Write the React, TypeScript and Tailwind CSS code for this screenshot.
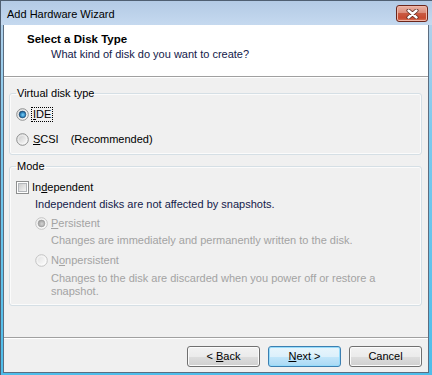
import { useId } from "react";
import type { ReactNode } from "react";

const font = "font-['Segoe_UI','Liberation_Sans',Arial,sans-serif]";

function Radio({ checked, disabled }: { checked?: boolean; disabled?: boolean }) {
  const id = useId().replace(/:/g, "");
  const ring = disabled ? "#c4c4c4" : "#8e8f8f";
  return (
    <svg width="13" height="13" viewBox="0 0 13 13" className="shrink-0">
      <defs>
        <linearGradient id={`o${id}`} x1="0" y1="0" x2="1" y2="1">
          <stop offset="0" stopColor={disabled ? "#ececec" : "#dcdcdc"} />
          <stop offset="1" stopColor="#ffffff" />
        </linearGradient>
        <linearGradient id={`i${id}`} x1="0" y1="0" x2="1" y2="1">
          <stop offset="0" stopColor={disabled ? "#e4e4e4" : "#cfcfcf"} />
          <stop offset="1" stopColor={disabled ? "#fafafa" : "#f7f7f7"} />
        </linearGradient>
        <radialGradient id={`d${id}`} cx="0.55" cy="0.55" r="0.6">
          <stop offset="0" stopColor={disabled ? "#d4d4d4" : "#7fd4fa"} />
          <stop offset="0.55" stopColor={disabled ? "#b4b4b4" : "#2f86c0"} />
          <stop offset="1" stopColor={disabled ? "#8e8e8e" : "#163f66"} />
        </radialGradient>
      </defs>
      <circle cx="6.5" cy="6.5" r="5.8" fill={`url(#o${id})`} stroke={ring} strokeWidth="1" />
      {checked ? (
        <circle cx="6.5" cy="6.5" r="3.4" fill={`url(#d${id})`} stroke={disabled ? "#9a9a9a" : "#1c4a70"} strokeWidth="0.6" />
      ) : (
        <circle cx="6.5" cy="6.5" r="3.6" fill={`url(#i${id})`} />
      )}
    </svg>
  );
}

function Checkbox() {
  const id = useId().replace(/:/g, "");
  return (
    <svg width="13" height="13" viewBox="0 0 13 13" className="shrink-0">
      <defs>
        <linearGradient id={`c${id}`} x1="0" y1="0" x2="1" y2="1">
          <stop offset="0" stopColor="#cbcbcb" />
          <stop offset="1" stopColor="#f6f6f6" />
        </linearGradient>
      </defs>
      <rect x="0.5" y="0.5" width="12" height="12" fill="#ffffff" stroke="#8e8f8f" />
      <rect x="2.5" y="2.5" width="8" height="8" fill={`url(#c${id})`} stroke="#b3b6ba" />
    </svg>
  );
}

function WinButton({ children, primary }: { children: ReactNode; primary?: boolean }) {
  return (
    <button
      className={
        primary
          ? "h-[21px] w-[73px] rounded-[3px] border border-[#3c7fb1] bg-[linear-gradient(to_bottom,#e8f5fc_0%,#dcf0fb_50%,#c2e6fa_51%,#aad9f4_100%)] text-[11px] leading-[15px] text-black shadow-[inset_0_0_0_1px_#97dcfb]"
          : "h-[21px] w-[73px] rounded-[3px] border border-[#707070] bg-[linear-gradient(to_bottom,#f2f2f2_0%,#ebebeb_50%,#dddddd_51%,#cfcfcf_100%)] text-[11px] leading-[15px] text-black shadow-[inset_0_0_0_1px_#fbfbfb]"
      }
    >
      {children}
    </button>
  );
}

export default function App() {
  return (
    <div
      className={`${font} flex h-[375px] w-[432px] flex-col overflow-hidden border-l border-t border-[#4f5f72] bg-[linear-gradient(to_bottom,#bcd2ea_0%,#7cc9ee_35%,#4dbdea_100%)] text-[11px] text-black`}
    >
      <div className="flex h-[24px] shrink-0 items-start justify-between bg-[linear-gradient(to_bottom,#b3cae5,#c5d9ef)] pl-[6px] pr-[4px]">
        <span className="mt-[6px] leading-[15px] text-black">Add Hardware Wizard</span>
        <div className="mt-[4px] flex h-[17px] w-[32px] items-center justify-center rounded-[3px] border border-[#6c261b] bg-[linear-gradient(to_bottom,#eab2a4_0%,#dc8d7b_45%,#c95a42_50%,#c84a30_80%,#d7775c_100%)] shadow-[inset_0_0_0_1px_#f0b7a8]">
          <svg width="13" height="10" viewBox="0 0 13 10">
            <path d="M2.5 1.5 L10.5 8.5 M10.5 1.5 L2.5 8.5" stroke="#5b2a22" strokeWidth="4" strokeLinecap="round" />
            <path d="M2.5 1.5 L10.5 8.5 M10.5 1.5 L2.5 8.5" stroke="#ffffff" strokeWidth="2.4" strokeLinecap="round" />
          </svg>
        </div>
      </div>

      <div className="flex min-h-0 flex-1 flex-col pb-[2px] pl-[2px] pr-[3px]">
        <div className="flex flex-1 flex-col border-x border-b border-[#5c6d80] bg-[#f0f0f0]">
          <div className="h-[52px] shrink-0 border-b border-[#a0a0a0] bg-white pl-[23px] pt-[7px]">
            <div className="text-[11.5px] font-bold leading-[15px]">Select a Disk Type</div>
            <div className="pl-[24px] leading-[15px] text-[#13204a]">What kind of disk do you want to create?</div>
          </div>
          <div className="h-px bg-white" />

          <fieldset className="ml-[5px] mr-[6px] mt-[8px] rounded-[3px] border border-[#d5dfe5] pb-[7px] pl-[6px] pt-[6px] shadow-[inset_0_0_0_1px_#fbfbfb]">
            <legend className="px-[1px] leading-[15px]">Virtual disk type</legend>
            <div className="flex h-[15px] items-center">
              <Radio checked />
              <span className="ml-[2px] border border-dotted border-black px-[1px] leading-[13px]">
                <span className="underline">I</span>DE
              </span>
            </div>
            <div className="mt-[10px] flex h-[15px] items-center">
              <Radio />
              <span className="ml-[4px] leading-[15px]">
                <span className="underline">S</span>CSI
              </span>
              <span className="ml-[12px] leading-[15px]">(Recommended)</span>
            </div>
          </fieldset>

          <fieldset className="ml-[5px] mr-[6px] mt-[4px] rounded-[3px] border border-[#d5dfe5] pb-[7px] pl-[6px] pt-[6px] shadow-[inset_0_0_0_1px_#fbfbfb]">
            <legend className="px-[1px] leading-[15px]">Mode</legend>
            <div className="flex h-[15px] items-center">
              <Checkbox />
              <span className="ml-[3px] leading-[15px]">
                In<span className="underline">d</span>ependent
              </span>
            </div>
            <div className="pl-[19px]">
              <div className="mt-[2px] leading-[15px] text-[#13204a]">Independent disks are not affected by snapshots.</div>
              <div className="mt-[4px] flex h-[15px] items-center text-[#a3a3a3]">
                <Radio checked disabled />
                <span className="ml-[3px] leading-[15px]">
                  <span className="underline">P</span>ersistent
                </span>
              </div>
              <div className="mt-[2px] pl-[16px] leading-[15px] text-[#a3a3a3]">
                Changes are immediately and permanently written to the disk.
              </div>
              <div className="mt-[5px] flex h-[15px] items-center text-[#a3a3a3]">
                <Radio disabled />
                <span className="ml-[3px] leading-[15px]">
                  N<span className="underline">o</span>npersistent
                </span>
              </div>
              <div className="mt-[4px] pl-[16px] leading-[13px] text-[#a3a3a3]">
                Changes to the disk are discarded when you power off or restore a
                <br />
                snapshot.
              </div>
            </div>
          </fieldset>

          <div className="mt-auto h-px bg-[#a0a0a0]" />
          <div className="h-px bg-white" />
          <div className="flex justify-end gap-[8px] pb-[5px] pr-[6px] pt-[7px]">
            <WinButton>
              &lt; <span className="underline">B</span>ack
            </WinButton>
            <WinButton primary>
              <span className="underline">N</span>ext &gt;
            </WinButton>
            <WinButton>Cancel</WinButton>
          </div>
        </div>
      </div>
    </div>
  );
}
